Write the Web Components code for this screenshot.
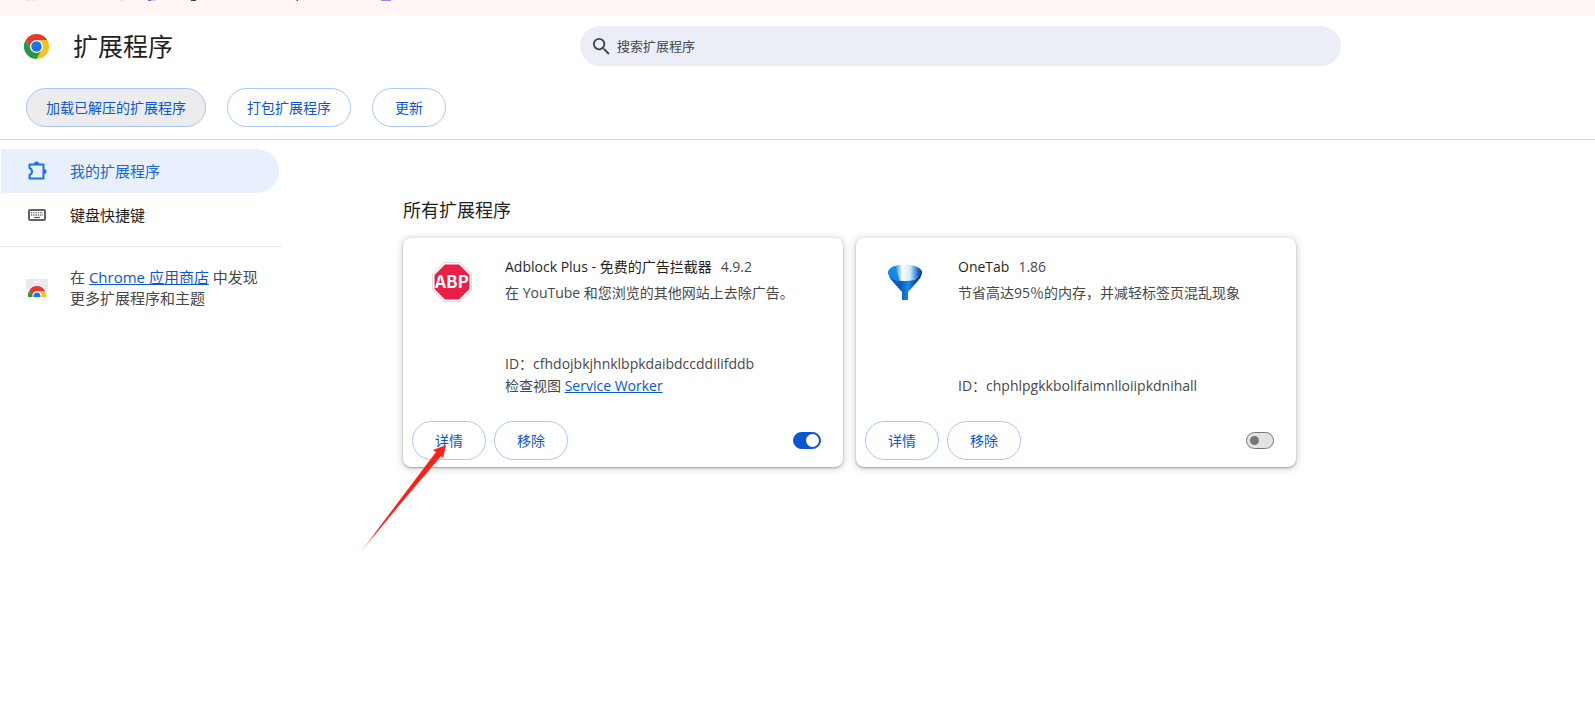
<!DOCTYPE html>
<html lang="zh-CN">
<head>
<meta charset="utf-8">
<title>扩展程序</title>
<style>
html,body{height:100%}
body{margin:0;background:#fff;color:#1f1f1f;font:14px/22px "Open Sans","Noto Sans CJK SC",sans-serif;overflow-x:hidden}
</style>
</head>
<body>
<extensions-page></extensions-page>

<script>
const define = (name, html, setup) => customElements.define(name, class extends HTMLElement {
  connectedCallback() {
    if (this.shadowRoot) return;
    const t = document.createElement('template');
    t.innerHTML = html;
    this.attachShadow({mode: 'open'}).append(t.content.cloneNode(true));
    if (setup) setup(this, this.shadowRoot);
  }
});

/* Outlined pill button */
define('pill-button', `
<style>
:host{display:block}
button{box-sizing:border-box;height:39px;min-width:74px;padding:0 19px;border:1px solid #a8c7fa;border-radius:20px;background:#fff;color:#0b57d0;font:inherit;cursor:pointer;white-space:nowrap}
:host([pressed]) button{background:#ececec}
</style>
<button type="button"><slot></slot></button>`);

/* On/off switch */
define('toggle-switch', `
<style>
:host{display:block;height:17px}
input{appearance:none;display:flex;align-items:center;box-sizing:border-box;width:28px;height:17px;margin:0;padding:0 3px;border:1px solid #747775;border-radius:9px;background:#e1e3e1;cursor:pointer}
input::before{content:"";width:9px;height:9px;border-radius:50%;background:#747775}
input:checked{justify-content:flex-end;padding:0 1px;background:#0b57d0;border-color:#0b57d0}
input:checked::before{width:13px;height:13px;background:#fff}
</style>
<input type="checkbox" role="switch">`);

/* Strip of browser chrome above the page */
define('browser-strip', `
<style>
:host{display:block;height:15px;background:#fff7f5;overflow:hidden}
svg{display:block}
</style>
<svg width="430" height="2" aria-hidden="true">
<path fill="#e6e4fa" d="M27 0h4v1h-4zM33 0h3v1h-3z"/><path fill="#fbd3bb" d="M121 0h2v1h-2z"/>
<path fill="#6a72b4" d="M148 0h3v1h-3z"/><path fill="#d0cdd4" d="M151 0h5v1h-5z"/>
<path fill="#4a4044" d="M191 0h5v1h-5z"/><path fill="#e0a050" d="M296 0h1v1h-1z"/><path fill="#4a4a80" d="M297 0h1v1h-1z"/><path fill="#948cf2" d="M381 0h10v1h-10z"/>
</svg>`);

define('search-box', `
<style>
:host{display:block}
label{display:flex;align-items:center;gap:4px;height:40px;padding:0 10px;border-radius:20px;background:#ebeef7}
svg{flex:none}
input{flex:1;min-width:0;border:0;outline:0;padding:0;background:none;color:#1f1f1f;font:inherit;font-size:13px}
input::placeholder{color:#474747;opacity:1}
</style>
<label><svg width="23" height="23" viewBox="0 0 24 24" fill="#474747" aria-hidden="true"><path d="M15.500 14h-.790l-.280-.270A6.470 6.470 0 0 0 16 9.500 6.500 6.500 0 1 0 9.500 16c1.610 0 3.090-.590 4.230-1.570l.270.280v.790l5 4.990L20.490 19l-4.990-5zm-6 0C7.010 14 5 11.990 5 9.500S7.010 5 9.500 5 14 7.010 14 9.500 11.990 14 9.500 14z"/></svg>
<input type="search" placeholder="搜索扩展程序" aria-label="搜索扩展程序"></label>`);

define('page-toolbar', `
<style>
:host{display:block;border-bottom:1px solid #d5d7da}
.top{display:grid;grid-template-columns:minmax(200px,580fr) minmax(0,761fr) minmax(0,254fr);align-items:center;padding-top:11px}
.brand{display:flex;align-items:center;gap:24px;padding-left:24px}
h1{margin:0;font-size:25px;line-height:36px;font-weight:400}
.actions{display:flex;gap:21px;padding:22px 26px 12px}
</style>
<div class="top">
<div class="brand">
<svg width="25" height="25" viewBox="0 0 48 48" aria-hidden="true">
<path fill="#e33b2e" d="M3.200 12A24 24 0 0 1 44.800 12L24 12.500 13.600 30z"/>
<path fill="#fcc116" d="M44.800 12A24 24 0 0 1 24 48L34.400 30 24 12z"/>
<path fill="#259846" d="M24 48A24 24 0 0 1 3.200 12L13.600 30 24 36 34.400 30z"/>
<circle cx="24" cy="24" r="12.500" fill="#fff"/><circle cx="24" cy="24" r="10" fill="#1a73e8"/></svg>
<h1>扩展程序</h1></div>
<search-box></search-box>
</div>
<div class="actions"><pill-button pressed>加载已解压的扩展程序</pill-button><pill-button>打包扩展程序</pill-button><pill-button>更新</pill-button></div>`);

define('nav-item', `
<style>
:host{display:block}
a{display:flex;align-items:center;gap:23px;height:44px;margin:0 3px 0 1px;padding-left:26px;border-radius:0 22px 22px 0;color:#1f1f1f;text-decoration:none;font-size:15px}
:host([active]) a{background:#e8f0fe;color:#1967d2}
</style>
<a href="#"><slot name="icon"></slot><span><slot></slot></span></a>`);

define('side-bar', `
<style>
:host{display:block;width:282px;flex:none;padding-top:9px}
svg{display:block;flex:none}
.store{display:flex;align-items:center;gap:22px;margin-top:9px;padding:20px 16px 0 26px;border-top:1px solid #ebebeb;color:#474747;font-size:15px;line-height:21px}
p{margin:0}
.store a{color:#0b57d0}
</style>
<nav aria-label="扩展程序">
<nav-item active><svg slot="icon" width="20" height="20" viewBox="0 0 20 20" fill="none" stroke="#1a73e8" stroke-width="2" aria-hidden="true"><path stroke-linejoin="round" d="M2.500 3.500H16.500V17.500H2.500V14Q5 13 5 10.500T2.500 7z"/><path fill="#1a73e8" stroke="none" d="M7 3a2.500 2.500 0 0 1 5 0zM17 8a2.500 2.500 0 0 1 0 5z"/></svg>我的扩展程序</nav-item>
<nav-item><svg slot="icon" width="20" height="20" viewBox="0 0 20 20" aria-hidden="true"><rect x="2" y="5" width="16" height="10" rx="1" fill="#fff" stroke="#5f6368" stroke-width="2"/><path stroke="#5f6368" stroke-width="1.300" stroke-dasharray="1.300 1" d="M4 7.700h12M4 10h12"/><path stroke="#5f6368" stroke-width="1.300" d="M7 12.500h6"/></svg>键盘快捷键</nav-item>
</nav>
<div class="store">
<svg width="22" height="18" viewBox="0 0 22 18" aria-hidden="true"><path fill="#e8eaed" d="M0 0h22v10H0z"/><path fill="#fff" d="M8 2h6v2H8z"/><path fill="#e33b2e" d="M3 12a9 9 0 0 1 16 0l-8 1-4 5z"/><path fill="#259846" d="M3 12a9 9 0 0 0-1 6h6z"/><path fill="#fcc116" d="M11 12h8a9 9 0 0 1 1 6h-6z"/><path fill="#fff" d="M6.500 18a4.700 4.700 0 1 1 9 0z"/><path fill="#1a73e8" d="M7.500 18a3.600 3.600 0 1 1 7 0z"/></svg>
<p>在 <a href="#">Chrome 应用商店</a> 中发现<br>更多扩展程序和主题</p></div>`);

define('extension-card', `
<style>
:host{display:block}
article{display:flex;flex-direction:column;box-sizing:border-box;height:229px;border-radius:8px;background:#fff;box-shadow:0 1px 2px rgba(60,64,67,.4),0 1px 6px 2px rgba(60,64,67,.18);color:#474747}
.info{display:flex;flex:1;padding:18px 9px 0 29px}
.icon{width:73px;flex:none;padding-top:6px}
.text{flex:1;display:flex;flex-direction:column;padding-bottom:24px}
h3{display:inline;margin:0 9px 0 0;font-size:14px;font-weight:400;color:#1f1f1f}
p,.id{margin:0}
p{padding-top:4px}
.foot{margin-top:auto}
.actions{display:flex;align-items:center;gap:8px;padding:0 22px 7px 9px}
toggle-switch{margin-left:auto}
</style>
<article>
<div class="info"><div class="icon"><slot name="icon"></slot></div>
<div class="text"><div><h3></h3><span class="version"></span></div><p><slot></slot></p>
<div class="foot"><div class="id"></div><slot name="views"></slot></div></div></div>
<div class="actions"><pill-button>详情</pill-button><pill-button>移除</pill-button><toggle-switch></toggle-switch></div>
</article>`, (host, root) => {
  root.querySelector('h3').textContent = host.getAttribute('name');
  root.querySelector('.version').textContent = host.getAttribute('version');
  root.querySelector('.id').textContent = 'ID：' + host.getAttribute('extension-id');
  const input = root.querySelector('toggle-switch').shadowRoot.querySelector('input');
  input.setAttribute('aria-label', host.getAttribute('name'));
  input.checked = host.hasAttribute('enabled');
});

define('extension-list', `
<style>
:host{display:block;flex:1;min-width:0;padding:57px 20px 40px 121px}
h2{margin:0 0 15px;font-size:18px;line-height:26px;font-weight:400}
.cards{display:grid;grid-template-columns:repeat(auto-fill,440px);gap:13px}
svg{display:block}
a{color:#0b57d0}
</style>
<h2>所有扩展程序</h2>
<div class="cards">
<extension-card name="Adblock Plus - 免费的广告拦截器" version="4.9.2" extension-id="cfhdojbkjhnklbpkdaibdccddilifddb" enabled>
<svg slot="icon" width="40" height="40" viewBox="0 0 40 40" role="img" aria-label="ABP"><path fill="#dedede" d="M12 0H28L40 12V28L28 40H12L0 28V12z"/><path fill="#fff" d="M12.400 1H27.600L39 12.400V27.600L27.600 39H12.400L1 27.600V12.400z"/><path fill="#ed1e45" d="M13 2.500H27L37.500 13V27L27 37.500H13L2.500 27V13z"/><text x="20" y="26" text-anchor="middle" fill="#fff" font-family="Noto Sans CJK SC, sans-serif" font-size="17" font-weight="700">ABP</text></svg>
在 YouTube 和您浏览的其他网站上去除广告。
<div slot="views">检查视图 <a href="#">Service Worker</a></div>
</extension-card>
<extension-card name="OneTab" version="1.86" extension-id="chphlpgkkbolifaimnlloiipkdnihall">
<svg slot="icon" width="40" height="40" viewBox="0 0 40 40" aria-hidden="true"><defs><linearGradient id="rim"><stop offset="0" stop-color="#1479e2"/><stop offset=".25" stop-color="#3ba2f0"/><stop offset=".42" stop-color="#fff"/><stop offset=".65" stop-color="#d3eafb"/><stop offset=".85" stop-color="#2a7fd4"/><stop offset="1" stop-color="#08285f"/></linearGradient><linearGradient id="body"><stop offset="0" stop-color="#0b62ce"/><stop offset=".35" stop-color="#0759bd"/><stop offset=".6" stop-color="#1689e8"/><stop offset="1" stop-color="#041d4e"/></linearGradient></defs>
<path fill="url(#body)" d="M3 11Q4 16 8 20L17 30V38H23V30L32 20Q36 16 37 11z"/><path fill="url(#rim)" d="M3 10C5 0 35 0 37 10Q36 14 30 18Q20 20 10 18Q4 14 3 10z"/><path fill="#1788e9" d="M3 10Q5 5 10 4L15 19L10 18Q4 15 3 10z"/></svg>
节省高达95％的内存，并减轻标签页混乱现象
</extension-card>
</div>`);

/* Annotation arrow that lies over the page */
define('pointer-arrow', `
<style>
:host{position:absolute;left:360px;top:444px;pointer-events:none}
svg{display:block}
</style>
<svg width="88" height="110" viewBox="0 0 88 110" aria-hidden="true"><defs><linearGradient id="fade" x1="0" y1="1" x2="1" y2="0"><stop offset="0" stop-color="#ff2015" stop-opacity=".2"/><stop offset=".2" stop-color="#ff2015"/></linearGradient></defs><path fill="url(#fade)" d="M0 109L39 57 76 8 73 6 86 1 83 14 81 12 42 58z"/></svg>`);

define('extensions-page', `
<style>
:host{display:block;position:relative;min-height:100%}
.body{display:flex}
</style>
<browser-strip></browser-strip>
<page-toolbar></page-toolbar>
<div class="body"><side-bar></side-bar><extension-list></extension-list></div>
<pointer-arrow></pointer-arrow>`);
</script>
</body>
</html>
